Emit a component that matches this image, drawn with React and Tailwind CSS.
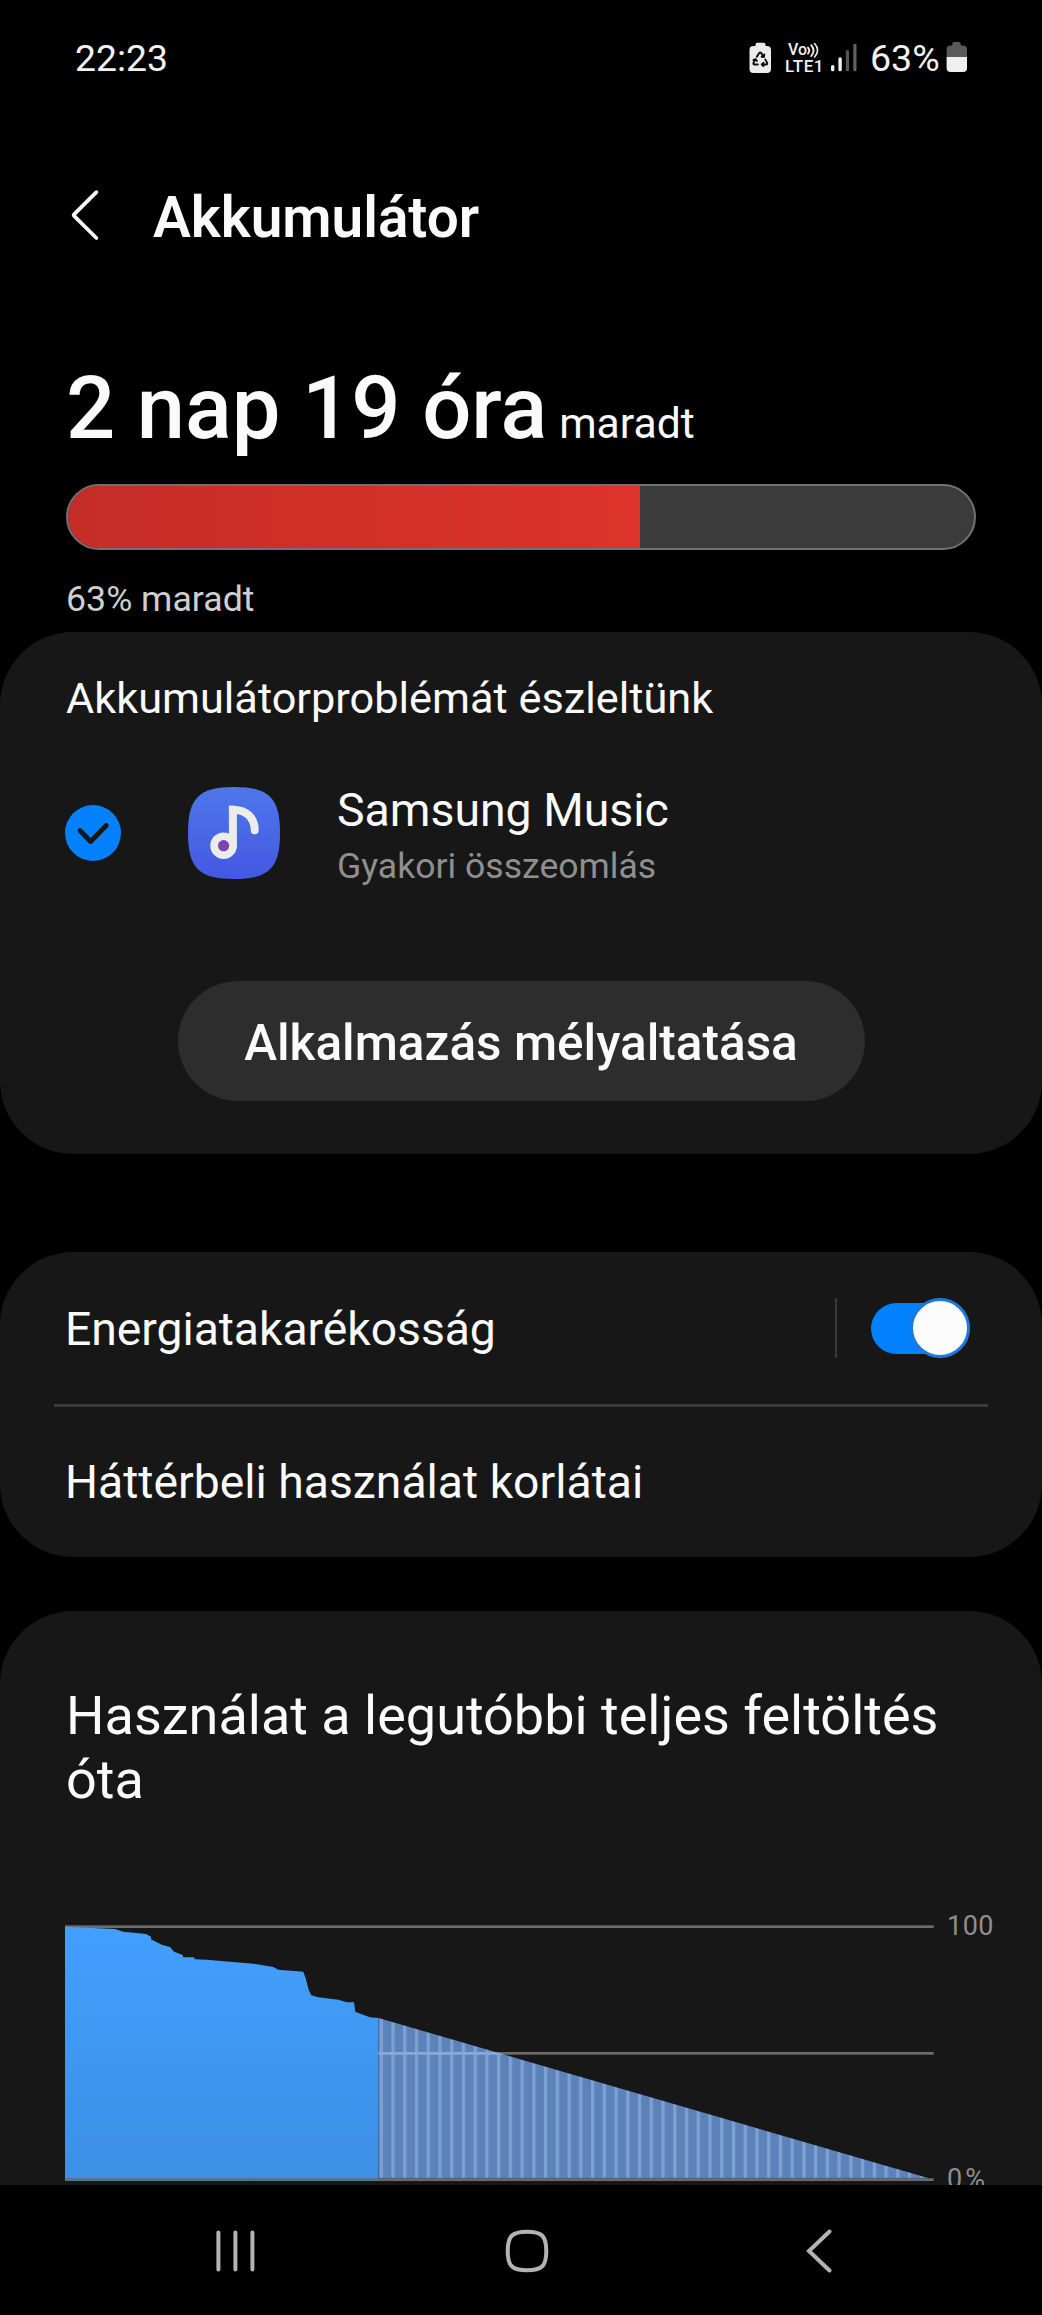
import { useState } from "react";

const batteryLevel = 63;

// battery history since the last full charge
const history = [
  [65, 1926.7], [115, 1929], [123.3, 1931.7], [146, 1934], [151, 1936.7], [151, 1939.3], [161.7, 1944.7],
  [170, 1947], [174, 1951.7], [182.7, 1955], [183.3, 1957.3], [194, 1957.3], [194.7, 1959.3], [206.7, 1959.7],
  [253.3, 1963.7], [273.3, 1967], [278.3, 1969.7], [303.3, 1971.7], [305.7, 1978.3], [308.7, 1990],
  [311.3, 1995.3], [318.3, 1997.3], [338.3, 1999.7], [346.7, 2002.3], [354, 2002.3], [355.3, 2011.7],
  [361.7, 2014.3], [370, 2017.3], [378.5, 2018],
];

function StatusBar() {
  return (
    <div className="flex justify-between pt-[38px] pl-[75px] pr-[75px] h-[78px] text-[#f2f2f2]">
      <span className="text-[37.3px] leading-[40px]">22:23</span>
      <div className="flex">
        <svg width="22" height="40" viewBox="749 38 22 40">
          <path d="M755.5 46v-1.5a1.8 1.8 0 0 1 1.8-1.8h6.4a1.8 1.8 0 0 1 1.8 1.8V46h1.5a4 4 0 0 1 4 4v19a4 4 0 0 1-4 4h-13.5a4 4 0 0 1-4-4V50a4 4 0 0 1 4-4z" fill="#ececec" />
          <g fill="none" stroke="#0c0c0c" strokeWidth="1.9" strokeLinecap="round" strokeLinejoin="round">
            <path d="M756.8 56.8L759.2 53.1q1-1.2 2 0L763.7 56.8M764.3 54.4L763.9 57.1L761.6 56.7" />
            <path d="M755.3 59.6L753.6 62.6q-.8 1.8 1 1.9H757.8M753.4 60.2L755.5 59.2L756.9 61" />
            <path d="M765.4 59.6L767 62.6q.8 1.8-1 1.9H762.2M763.4 62.8L761.8 64.5L763.4 66.1" />
          </g>
        </svg>
        <div className="flex flex-col ml-[14px] mt-1 w-[37px] font-medium">
          <div className="flex h-4 pl-[3px]">
            <span className="text-[16px] leading-4">Vo</span>
            <svg width="13" height="16" viewBox="0 0 13 16" fill="none" stroke="#ececec" strokeWidth="1.9" strokeLinecap="round">
              <path d="M1 5.6q2.600 3 0 6" />
              <path d="M4.200 3.200q4.600 5.400 0 10.800" />
              <path d="M7.600 1.500q6 6.800 0 13.500" strokeWidth="1.6" />
            </svg>
          </div>
          <span className="text-[17px] leading-[17px] tracking-[0.6px]">LTE1</span>
        </div>
        <svg width="26" height="40" viewBox="831 38 26 40" className="ml-[9px]">
          <rect x="831" y="65" width="3.4" height="6.3" rx="1.6" fill="#f2f2f2" />
          <rect x="838.4" y="57.3" width="3.4" height="14" rx="1.6" fill="#f2f2f2" />
          <rect x="845.8" y="50" width="3.2" height="21.3" rx="1.6" fill="#565656" />
          <rect x="853.3" y="43.7" width="3.2" height="27.6" rx="1.6" fill="#626262" />
        </svg>
        <span className="ml-[13px] w-[76px] text-[37.6px] leading-[40px]">{batteryLevel}%</span>
        <svg width="21" height="40" viewBox="946 38 21 40">
          <path d="M952.3 45.5v-1.7a1.8 1.8 0 0 1 1.8-1.8h4.8a1.8 1.8 0 0 1 1.8 1.8v1.7h2.3a4 4 0 0 1 4 4V57h-20.4v-7.5a4 4 0 0 1 4-4z" fill="#5a5a5a" />
          <path d="M946.6 57H967v11a4 4 0 0 1-4 4h-12.4a4 4 0 0 1-4-4z" fill="#efefef" />
        </svg>
      </div>
    </div>
  );
}

function Header() {
  return (
    <div className="flex pt-[110px] pl-[70px]">
      <svg width="30" height="60" viewBox="70 188 30 60" fill="none" stroke="#f5f5f5" strokeWidth="3.8" strokeLinecap="round" strokeLinejoin="round">
        <path d="M96.4 192.2L74.3 214.2q-1 1 0 2L96.4 238" />
      </svg>
      <h1 className="ml-[53px] text-[56.7px] leading-[60px] font-semibold text-[#fafafa]">Akkumulátor</h1>
    </div>
  );
}

function Remaining() {
  return (
    <div className="mt-[116px] px-[66px]">
      <div className="flex items-baseline h-[90px] text-[#fafafa]">
        <span className="text-[86.7px] leading-[90px] font-medium">2 nap 19 óra</span>
        <span className="ml-[12px] text-[42.7px]">maradt</span>
      </div>
      <div className="mt-[30px] h-[66px] w-[910px] rounded-full border-2 border-[#717171] bg-[#3b3b3b] overflow-hidden">
        <div className="h-full w-[572px] bg-linear-to-r from-[#c42d26] to-[#dd332b]"></div>
      </div>
      <p className="mt-[28px] text-[35.7px] leading-[42px] text-[#cfcfcf]">{batteryLevel}% maradt</p>
    </div>
  );
}

function MusicIcon() {
  return (
    <svg width="92" height="92" viewBox="188 787 92 92" className="mt-1 ml-[67px]">
      <defs>
        <linearGradient id="music" x1="0" y1="0" x2="0" y2="1">
          <stop offset="0" stopColor="#4f77e9" />
          <stop offset="1" stopColor="#4358e2" />
        </linearGradient>
      </defs>
      <path d="M234 787c35 0 46 11 46 46s-11 46-46 46-46-11-46-46 11-46 46-46z" fill="url(#music)" />
      <path d="M232.9 845.7V809.7C245.5 809.7 254.7 817 254.7 830.2" fill="none" stroke="#ececec" strokeWidth="8" strokeLinecap="round" />
      <path d="M228.9 805.7h6v6h-6z" fill="#ececec" />
      <circle cx="223.6" cy="845.7" r="13.3" fill="#ececec" />
      <circle cx="223.6" cy="845.7" r="5.6" fill="#7748b4" />
    </svg>
  );
}

function ProblemCard() {
  return (
    <section className="mt-[12px] h-[522px] rounded-[73px] bg-[#171717] pt-[42px]">
      <h2 className="pl-[66px] text-[43.3px] leading-[50px]">Akkumulátorproblémát észleltünk</h2>
      <div className="mt-[59px] flex h-[105px] items-start pl-[65px]">
        <svg width="56" height="56" viewBox="0 0 56 56" className="mt-[22px]">
          <circle cx="28" cy="28" r="28" fill="#0381fe" />
          <path d="M15 25.5L25.7 36.5L41.3 20.5" fill="none" stroke="#171717" strokeWidth="4.8" strokeLinecap="round" strokeLinejoin="round" />
        </svg>
        <MusicIcon />
        <div className="ml-[57px] flex flex-col gap-[7px]">
          <span className="text-[46.4px] leading-[54px]">Samsung Music</span>
          <span className="text-[35.6px] leading-[44px] text-[#8f8f8f]">Gyakori összeomlás</span>
        </div>
      </div>
      <button className="mx-auto mt-[93px] flex h-[120px] w-[687px] items-center justify-center rounded-full bg-[#2d2d2d] pt-1 text-[49.5px] font-medium">
        Alkalmazás mélyaltatása
      </button>
    </section>
  );
}

function PowerSaving() {
  const [enabled, setEnabled] = useState(true);

  return (
    <section className="mt-[98px] rounded-[73px] bg-[#171717] text-[46.3px]">
      <div className="flex h-[152px] items-center pl-[65px] pr-[72px]">
        <span className="flex-1 pt-1 tracking-[-0.05px]">Energiatakarékosság</span>
        <div className="h-[60px] w-[2px] bg-[#3a3a3a]"></div>
        <button
          className={`ml-[34px] flex h-[51px] w-[99px] items-center rounded-full ${enabled ? "justify-end bg-[#0381fe]" : "justify-start bg-[#4a4a4a]"}`}
          onClick={() => setEnabled(!enabled)}
        >
          <span className="h-[60px] w-[60px] shrink-0 rounded-full border-[3px] border-[#1b7bdc] bg-[#fcfcfc]"></span>
        </button>
      </div>
      <div className="mx-[54px] h-[3px] bg-[#3a3a3a]"></div>
      <div className="flex h-[150px] items-center pt-[2px] pl-[65px]">Háttérbeli használat korlátai</div>
    </section>
  );
}

function UsageChart() {
  const points = history.map((p) => p.join(",")).join(" ");

  return (
    <svg width="870" height="280" viewBox="65 1905 870 280">
      <defs>
        <linearGradient id="used" x1="0" y1="0" x2="0" y2="1">
          <stop offset="0" stopColor="#429fff" />
          <stop offset="1" stopColor="#3c8fe4" />
        </linearGradient>
        <pattern id="stripes" x="379.7" y="0" width="11.74" height="20" patternUnits="userSpaceOnUse">
          <rect width="11.74" height="20" fill="#5b83ba" />
          <rect width="3.2" height="20" fill="#7ea1d1" />
        </pattern>
      </defs>
      <rect x="65" y="1925.3" width="868.7" height="2.7" fill="#6b6b6b" />
      <rect x="65" y="2052" width="868.7" height="2.7" fill="#6b6b6b" />
      <polygon points={`65,2179 ${points} 378.5,2179`} fill="url(#used)" />
      <polygon points="378.5,2018 928,2178 378.5,2178" fill="url(#stripes)" />
      <path d="M378.5 2052H495.3L504.6 2054.7H378.5z" fill="#8aa9d8" />
      <rect x="65" y="2178.3" width="868.7" height="2.7" fill="#6b6b6b" />
      <rect x="65" y="2178.3" width="313.5" height="2.7" fill="#58748a" />
      <rect x="378.5" y="2177.8" width="549" height="1" fill="#566a86" />
    </svg>
  );
}

function UsageCard() {
  return (
    <section className="mt-[54px] h-[574px] overflow-hidden rounded-t-[73px] bg-[#171717] pt-[73px] pl-[65px]">
      <h2 className="w-[900px] pl-px text-[54px] leading-[63.5px]">Használat a legutóbbi teljes feltöltés óta</h2>
      <div className="mt-[94px] flex h-[280px]">
        <UsageChart />
        <div className="ml-[12px] flex flex-col gap-[223px] pt-[6px] text-[27px] leading-[30px] text-[#8e8e8e]">
          <span className="tracking-[0.5px]">100</span>
          <span className="tracking-[3px]">0%</span>
        </div>
      </div>
    </section>
  );
}

function NavBar() {
  return (
    <nav className="flex h-[130px] gap-[248px] bg-black pt-[44px] pl-[213px]">
      <svg width="44" height="44" viewBox="0 0 44 44" stroke="#b3b3b3" strokeWidth="4" strokeLinecap="round">
        <path d="M5.4 3.6V40.4M22.4 3.6V40.4M39.4 3.6V40.4" />
      </svg>
      <svg width="44" height="44" viewBox="0 0 44 44" fill="none" stroke="#b3b3b3" strokeWidth="4">
        <path d="M22 2.7c15 0 19.3 4.3 19.3 19.3S37 41.3 22 41.3 2.7 37 2.7 22 7 2.7 22 2.7z" />
      </svg>
      <svg width="44" height="44" viewBox="0 0 44 44" fill="none" stroke="#b3b3b3" strokeWidth="4" strokeLinecap="round">
        <path d="M32.5 2.5L12 22L32.5 41.5" />
      </svg>
    </nav>
  );
}

function App() {
  return (
    <div className="flex h-[2315px] w-[1042px] flex-col overflow-hidden bg-black font-[Roboto,sans-serif] text-[#fafafa]">
      <StatusBar />
      <Header />
      <Remaining />
      <ProblemCard />
      <PowerSaving />
      <UsageCard />
      <NavBar />
    </div>
  );
}

export default App;
